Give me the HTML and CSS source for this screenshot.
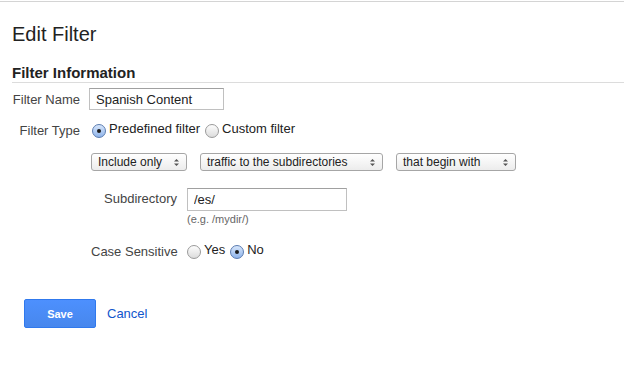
FILE: index.html
```html
<!DOCTYPE html>
<html lang="en">
<head>
    <meta charset="UTF-8">
    <title>Edit Filter</title>
    <link rel="stylesheet" href="styles.css">
</head>
<body>
    <div class="page">
        <h1>Edit Filter</h1>
        <h2>Filter Information</h2>

        <div class="row name-row">
            <label class="lbl">Filter Name</label>
            <input class="txt name-in" type="text" value="Spanish Content">
        </div>

        <div class="row type-row">
            <span class="lbl">Filter Type</span>
            <span class="radio on"></span><span class="opt">Predefined filter</span>
            <span class="radio"></span><span class="opt">Custom filter</span>
        </div>

        <div class="sub">
            <div class="sels">
                <div class="sel w1"><span>Include only</span><svg width="7" height="9" viewBox="0 0 7 9"><path d="M1 3.5 L3.5 1 L6 3.5 Z M1 5.5 L3.5 8 L6 5.5 Z" fill="#555"/></svg></div>
                <div class="sel w2"><span>traffic to the subdirectories</span><svg width="7" height="9" viewBox="0 0 7 9"><path d="M1 3.5 L3.5 1 L6 3.5 Z M1 5.5 L3.5 8 L6 5.5 Z" fill="#555"/></svg></div>
                <div class="sel w3"><span>that begin with</span><svg width="7" height="9" viewBox="0 0 7 9"><path d="M1 3.5 L3.5 1 L6 3.5 Z M1 5.5 L3.5 8 L6 5.5 Z" fill="#555"/></svg></div>
            </div>

            <div class="row dir-row">
                <label class="lbl sublbl">Subdirectory</label>
                <div>
                    <input class="txt dir-in" type="text" value="/es/">
                    <div class="hint">(e.g. /mydir/)</div>
                </div>
            </div>

            <div class="row case-row">
                <span class="lbl sublbl">Case Sensitive</span>
                <span class="radio"></span><span class="opt">Yes</span>
                <span class="radio on"></span><span class="opt">No</span>
            </div>
        </div>

        <div class="actions">
            <button class="save">Save</button>
            <a class="cancel" href="#">Cancel</a>
        </div>
    </div>
</body>
</html>
```

FILE: styles.css
```css
body {
    margin: 0;
    padding: 0;
    font-family: "Liberation Sans", Arial, sans-serif;
    background-color: #fff;
    color: #222;
}
.page {
    margin-top: 1px;
    border-top: 1px solid #d4d4d4;
    padding: 0 0 40px 12px;
}
h1 {
    font-size: 20px;
    font-weight: normal;
    line-height: 24px;
    margin: 20px 0 0 0;
    color: #222;
}
h2 {
    font-size: 15px;
    font-weight: bold;
    line-height: 17px;
    margin: 18px 0 0 0;
    padding-bottom: 1px;
    border-bottom: 1px solid #dcdcdc;
    color: #222;
}
.row {
    display: flex;
    align-items: center;
}
.lbl {
    font-size: 13px;
    color: #444;
    width: 68px;
    text-align: right;
    margin-right: 9px;
    white-space: nowrap;
}
.name-row {
    margin-top: 5px;
}
.txt {
    font-family: "Liberation Sans", Arial, sans-serif;
    font-size: 13px;
    color: #222;
    border: 1px solid #c0c0c0;
    border-top-color: #a0a0a0;
    padding: 0 6px;
    height: 22px;
    box-sizing: border-box;
    outline: none;
}
.name-in {
    width: 135px;
}
.type-row {
    margin-top: 13px;
}
.type-row .lbl {
    margin-right: 12px;
}
.radio {
    display: inline-block;
    width: 12px;
    height: 12px;
    border-radius: 50%;
    border: 1px solid #9a9a9a;
    background: linear-gradient(#fdfdfd, #dcdcdc);
    position: relative;
    margin-right: 3px;
    flex: none;
}
.radio.on {
    border-color: #5a7bb0;
    background: linear-gradient(#d7e6fb, #8fb4ea);
}
.radio.on::after {
    content: "";
    position: absolute;
    left: 4px;
    top: 4px;
    width: 4px;
    height: 4px;
    border-radius: 50%;
    background: #1a1a1a;
}
.opt {
    font-size: 13px;
    color: #222;
    margin-right: 5px;
    position: relative;
    top: -2px;
}
.sub {
    padding-left: 79px;
}
.sels {
    display: flex;
    gap: 13px;
    margin-top: 15px;
}
.sel {
    display: flex;
    align-items: center;
    justify-content: space-between;
    height: 18px;
    box-sizing: border-box;
    border: 1px solid #a6a6a6;
    border-radius: 3px;
    background: linear-gradient(#ffffff, #ececec);
    padding: 0 6px 0 6px;
    font-size: 12px;
    color: #222;
}
.w1 { width: 96px; }
.w2 { width: 183px; }
.w3 { width: 120px; }
.dir-row {
    margin-top: 17px;
    align-items: flex-start;
}
.sublbl {
    width: 86px;
    margin-right: 10px;
}
.dir-row .sublbl {
    line-height: 22px;
}
.dir-in {
    width: 160px;
    height: 23px;
}
.hint {
    font-size: 11px;
    color: #666;
    margin-top: 2px;
}
.case-row {
    margin-top: 19px;
}
.case-row .sublbl {
    margin-right: 10px;
}
.actions {
    display: flex;
    align-items: center;
    margin-top: 40px;
    padding-left: 12px;
}
.save {
    width: 72px;
    height: 29px;
    background: linear-gradient(#4d90fe, #4787ed);
    border: 1px solid #3079ed;
    border-radius: 2px;
    color: #fff;
    font-family: "Liberation Sans", Arial, sans-serif;
    font-size: 11px;
    font-weight: bold;
    margin-right: 11px;
}
.cancel {
    font-size: 13px;
    color: #15c;
    text-decoration: none;
}
```
